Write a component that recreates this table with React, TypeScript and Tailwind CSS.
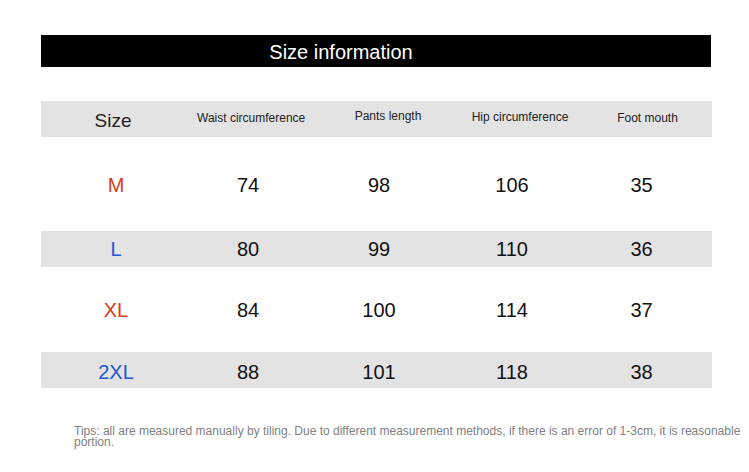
const COLS = 'grid grid-cols-[150px_114px_148px_118px_141px] items-center';

const ROWS = [
  { size: 'M', color: 'text-[#d2401c]', vals: ['74', '98', '106', '35'], gray: false, h: 'h-[94px] pt-[1px]' },
  { size: 'L', color: 'text-[#2457d6]', vals: ['80', '99', '110', '36'], gray: true, h: 'h-[36px] pb-[1px]' },
  { size: 'XL', color: 'text-[#d2401c]', vals: ['84', '100', '114', '37'], gray: false, h: 'h-[85px]' },
  { size: '2XL', color: 'text-[#2457d6]', vals: ['88', '101', '118', '38'], gray: true, h: 'h-[36px] pt-[4px]' },
];

export default function App() {
  return (
    <div className="w-[749px] h-[472px] bg-white overflow-hidden font-['Liberation_Sans',Arial,sans-serif]">
      <div className="pt-[35px] pl-[41px]">
        {/* title bar */}
        <div className="w-[670px] h-[32px] bg-black flex items-center">
          <div className="w-[600px] text-center text-white text-[20px] leading-none pt-[2px]">Size information</div>
        </div>

        {/* header row */}
        <div className={`${COLS} mt-[34px] w-[671px] h-[36px] bg-[#e3e3e3] text-[#222] whitespace-nowrap`}>
          <div className="text-center text-[19px] pr-[6px] pt-[4px]">Size</div>
          <div className="text-center text-[12px] pl-[6px] -mt-[3px]">Waist circumference</div>
          <div className="text-center text-[12px] pl-[18px] -mt-[7px]">Pants length</div>
          <div className="text-center text-[12px] pl-[16px] -mt-[5px]">Hip circumference</div>
          <div className="text-center text-[12px] pl-[12px] -mt-[3px]">Foot mouth</div>
        </div>

        {ROWS.map((r) => (
          <div key={r.size} className={`${COLS} w-[671px] ${r.h} ${r.gray ? 'bg-[#e3e3e3]' : 'bg-white'}`}>
            <div className={`text-center text-[20px] ${r.color}`}>{r.size}</div>
            {r.vals.map((v, i) => (
              <div key={i} className="text-center text-[20px] text-[#111]">{v}</div>
            ))}
          </div>
        ))}
      </div>

      <p className="ml-[74px] mt-[38px] w-[672px] text-[12px] leading-[11px] text-[#808080]">
        Tips: all are measured manually by tiling. Due to different measurement methods, if there is an error of 1-3cm, it is reasonable portion.
      </p>
    </div>
  );
}
